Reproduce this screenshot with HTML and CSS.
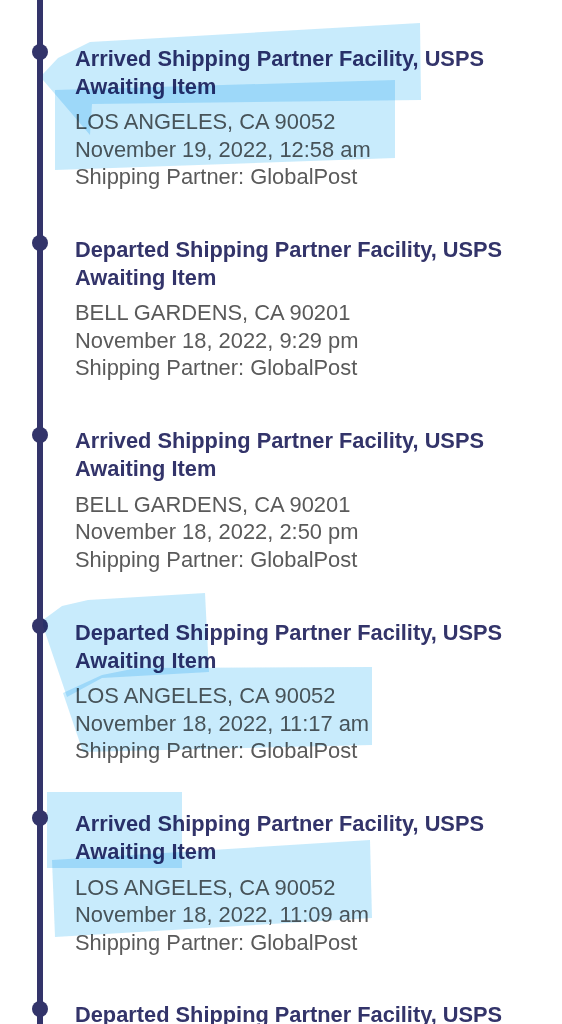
FILE: index.html
```html
<!DOCTYPE html>
<html lang="en">
<head>
<meta charset="utf-8">
<title>Tracking History</title>
<link rel="stylesheet" href="styles.css">
</head>
<body>
<div class="page">
  <ol class="timeline">
    <li class="event">
      <h3 class="event-title">Arrived Shipping Partner Facility, USPS Awaiting Item</h3>
      <p class="event-detail">LOS ANGELES, CA 90052<br>November 19, 2022, 12:58 am<br>Shipping Partner: GlobalPost</p>
    </li>
    <li class="event">
      <h3 class="event-title">Departed Shipping Partner Facility, USPS Awaiting Item</h3>
      <p class="event-detail">BELL GARDENS, CA 90201<br>November 18, 2022, 9:29 pm<br>Shipping Partner: GlobalPost</p>
    </li>
    <li class="event">
      <h3 class="event-title">Arrived Shipping Partner Facility, USPS Awaiting Item</h3>
      <p class="event-detail">BELL GARDENS, CA 90201<br>November 18, 2022, 2:50 pm<br>Shipping Partner: GlobalPost</p>
    </li>
    <li class="event">
      <h3 class="event-title">Departed Shipping Partner Facility, USPS Awaiting Item</h3>
      <p class="event-detail">LOS ANGELES, CA 90052<br>November 18, 2022, 11:17 am<br>Shipping Partner: GlobalPost</p>
    </li>
    <li class="event">
      <h3 class="event-title">Arrived Shipping Partner Facility, USPS Awaiting Item</h3>
      <p class="event-detail">LOS ANGELES, CA 90052<br>November 18, 2022, 11:09 am<br>Shipping Partner: GlobalPost</p>
    </li>
    <li class="event">
      <h3 class="event-title">Departed Shipping Partner Facility, USPS Awaiting Item</h3>
      <p class="event-detail">LOS ANGELES, CA 90052<br>November 18, 2022, 10:41 am<br>Shipping Partner: GlobalPost</p>
    </li>
  </ol>
  <svg class="marks" width="562" height="1024" viewBox="0 0 562 1024" aria-hidden="true">
    <g class="mark">
      <polygon points="43,74 58,58 90,42 420,23 421,100 92,104 90,135 43,80"/>
      <polygon points="55,90 395,80 395,158 55,170"/>
    </g>
    <g class="mark">
      <polygon points="43,620 62,606 88,600 205,593 209,672 102,678 67,697 43,626"/>
      <polygon points="63,693 102,675 137,668 372,667 372,745 83,752"/>
    </g>
    <g class="mark">
      <polygon points="47,792 182,792 182,868 47,868"/>
      <polygon points="52,860 370,840 372,918 55,937"/>
    </g>
  </svg>
</div>
</body>
</html>
```

FILE: styles.css
```css
* {
  box-sizing: border-box;
}

body {
  margin: 0;
  background: #ffffff;
  font-family: "Liberation Sans", Arial, Helvetica, sans-serif;
}

.page {
  position: relative;
  height: 1024px;
  overflow: hidden;
}

.timeline {
  list-style: none;
  margin: 0 0 0 37px;
  padding: 44.5px 20px 0 32px;
  border-left: 6px solid #33346a;
}

.event {
  position: relative;
  margin-bottom: 45.4px;
}

.event::before {
  content: "";
  position: absolute;
  left: -43px;
  top: -0.5px;
  width: 16px;
  height: 16px;
  border-radius: 50%;
  background: #33346a;
}

.event-title {
  margin: 0;
  font-size: 21.8px;
  line-height: 28px;
  font-weight: 700;
  color: #33346a;
}

.event-detail {
  margin: 7.5px 0 0;
  font-size: 21.9px;
  line-height: 27.5px;
  color: #5a5a5a;
}

.marks {
  position: absolute;
  left: 0;
  top: 0;
  pointer-events: none;
}

.mark polygon {
  fill: rgba(102, 199, 247, 0.36);
  mix-blend-mode: multiply;
}
```
